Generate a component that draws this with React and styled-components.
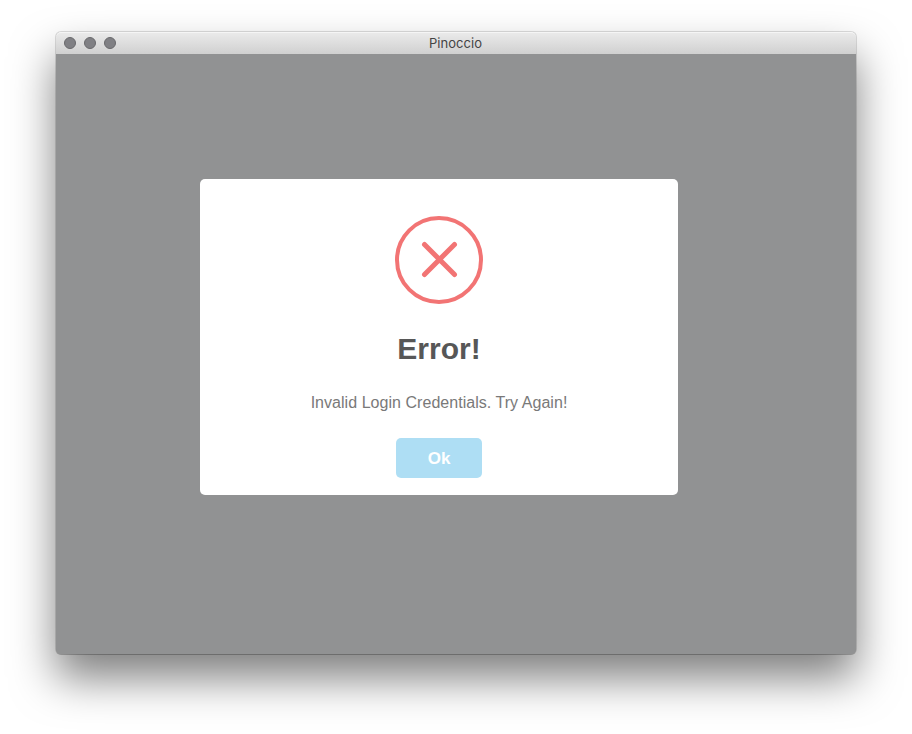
import React from "react";
import styled, { createGlobalStyle } from "styled-components";

const GlobalStyle = createGlobalStyle`
  * { box-sizing: border-box; }
  body { margin: 0; background: #fff; overflow: hidden; }
`;

const Desktop = styled.main`
  width: 912px;
  height: 734px;
  padding: 32px 56px 0;
  overflow: hidden;
`;

const Window = styled.section`
  width: 800px;
  height: 622px;
  display: flex;
  flex-direction: column;
  border-radius: 5px;
  background: #919293;
  box-shadow: 0 0 0 1px rgba(0, 0, 0, 0.13), 0 1px 0 rgba(0, 0, 0, 0.12), 0 24px 44px rgba(0, 0, 0, 0.5);
`;

const TitleBar = styled.header`
  height: 22px;
  flex: none;
  display: grid;
  grid-template-columns: 1fr auto 1fr;
  align-items: center;
  padding: 0 8px;
  border-radius: 5px 5px 0 0;
  background: linear-gradient(#ebebeb, #d0d0d0);
  box-shadow: inset 0 1px #f5f5f5;
`;

const Controls = styled.div`
  display: flex;
  gap: 8px;
`;

const Control = styled.span`
  width: 12px;
  height: 12px;
  border: 1px solid #69696c;
  border-radius: 50%;
  background: #808084;
`;

const Title = styled.h1`
  margin: 0 1px 0 0;
  font: 400 13px/22px Inter, sans-serif;
  letter-spacing: 0.04px;
  color: #444;
`;

const Body = styled.div`
  flex: 1;
  padding: 125px 0 0 144px;
`;

const Dialog = styled.div`
  width: 478px;
  height: 316px;
  display: flex;
  flex-direction: column;
  align-items: center;
  padding-top: 37px;
  border-radius: 5px;
  background: #fff;
  font-family: "Liberation Sans", Arial, sans-serif;
`;

const ErrorIcon = styled.svg`
  width: 88px;
  height: 88px;
  display: block;
`;

const Heading = styled.h2`
  margin: 25px 0 0;
  font-size: 30px;
  line-height: 40px;
  font-weight: 700;
  color: #575757;
`;

const Message = styled.p`
  margin: 24px 0 0;
  font-size: 16px;
  line-height: 20px;
  letter-spacing: 0.04px;
  color: #797979;
`;

const OkButton = styled.button`
  width: 86px;
  height: 40px;
  margin-top: 25px;
  padding: 2px 0 0;
  border: 0;
  border-radius: 5px;
  background: #aedef4;
  color: #fff;
  font: 700 17px/38px "Liberation Sans", Arial, sans-serif;
`;

export default function App() {
  return (
    <Desktop>
      <GlobalStyle />
      <Window>
        <TitleBar>
          <Controls>
            <Control />
            <Control />
            <Control />
          </Controls>
          <Title>Pinoccio</Title>
        </TitleBar>
        <Body>
          <Dialog role="alertdialog">
            <ErrorIcon viewBox="0 0 88 88" fill="none" stroke="#f27474">
              <circle cx="44" cy="44" r="42" strokeWidth="4" />
              <path d="M29.5 28.5 59.5 58.5M59.5 28.5 29.5 58.5" strokeWidth="5" strokeLinecap="round" />
            </ErrorIcon>
            <Heading>Error!</Heading>
            <Message>Invalid Login Credentials. Try Again!</Message>
            <OkButton>Ok</OkButton>
          </Dialog>
        </Body>
      </Window>
    </Desktop>
  );
}
